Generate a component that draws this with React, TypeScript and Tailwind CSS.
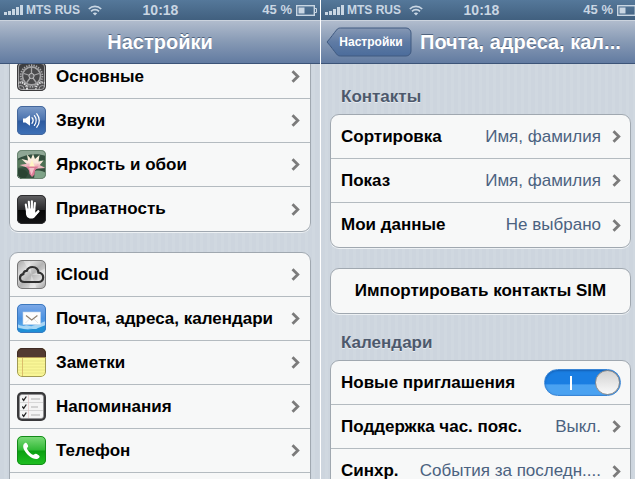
import React from "react";

type Item = { title: string; icon: React.ReactNode };

const Tile = ({ children }: { children: React.ReactNode }) => (
  <svg className="size-[29px] shrink-0 rounded-[5px]" viewBox="0 0 29 29" aria-hidden="true">{children}</svg>
);

const TileBorder = ({ color }: { color: string }) => (
  <rect x="0.5" y="0.5" width="28" height="28" rx="4.5" fill="none" stroke={color} />
);

const GearIcon = () => (
  <Tile>
    <defs>
      <linearGradient id="gear" x1="0" y1="0" x2="0" y2="1">
        <stop offset="0" stopColor="#3a3a3c" />
        <stop offset="1" stopColor="#58585a" />
      </linearGradient>
    </defs>
    <rect width="29" height="29" fill="url(#gear)" />
    <circle cx="14.5" cy="14" r="10.8" fill="none" stroke="#a9a9ab" strokeWidth="1.800" strokeDasharray="1.4 1.1" />
    <circle cx="14.5" cy="14" r="9" fill="none" stroke="#a2a2a4" strokeWidth="1.800" />
    <circle cx="14.5" cy="14" r="7.800" fill="#4a4a4c" />
    <g stroke="#a6a6a8" strokeWidth="1.300">
      <path d="M14.500 14V6M14.500 14l7.600-2.500M14.500 14l4.700 6.500M14.500 14l-4.700 6.500M14.500 14l-7.600-2.500" />
    </g>
    <circle cx="14.5" cy="14" r="2.600" fill="#606062" stroke="#c2c2c4" />
    <circle cx="3.500" cy="27" r="6.500" fill="#505052" stroke="#dededf" strokeWidth="2" strokeDasharray="1.4 1" />
    <circle cx="25.500" cy="27" r="6.500" fill="#505052" stroke="#dededf" strokeWidth="2" strokeDasharray="1.4 1" />
    <circle cx="3.500" cy="27" r="3.500" fill="none" stroke="#a5a5a7" />
    <circle cx="25.500" cy="27" r="3.500" fill="none" stroke="#a5a5a7" />
    <TileBorder color="#3c3c3e" />
    <rect x="1.5" y="1.5" width="26" height="26" rx="3.5" fill="none" stroke="#c4c4c6" opacity="0.7" />
  </Tile>
);

const SoundIcon = () => (
  <Tile>
    <defs>
      <linearGradient id="sound" x1="0" y1="0" x2="0" y2="1">
        <stop offset="0" stopColor="#7d9cc9" />
        <stop offset="0.48" stopColor="#4a72ae" />
        <stop offset="0.52" stopColor="#2d5a9f" />
        <stop offset="1" stopColor="#3f72b8" />
      </linearGradient>
    </defs>
    <rect width="29" height="29" fill="url(#sound)" />
    <path d="M6 12.500h2.500L13 9.300v10.400l-4.500-3.200H6z" fill="#fff" />
    <g fill="none" stroke="#fff" strokeWidth="1.300" strokeLinecap="round">
      <path d="M15 11.700c1.300 1.600 1.300 4 0 5.600" />
      <path d="M17.400 9.700c2.300 2.800 2.300 6.800 0 9.600" />
      <path d="M19.800 7.800c3.300 3.900 3.300 9.500 0 13.400" />
    </g>
    <TileBorder color="#44679c" />
  </Tile>
);

const LotusIcon = () => (
  <Tile>
    <defs>
      <linearGradient id="petal" x1="0" y1="0" x2="0" y2="1">
        <stop offset="0" stopColor="#fdf6dc" />
        <stop offset="0.55" stopColor="#fbeade" />
        <stop offset="1" stopColor="#e795a8" />
      </linearGradient>
    </defs>
    <rect width="29" height="29" fill="#35503f" />
    <path d="M0 0h29v6C20 3 9 4 0 9z" fill="#8fa795" />
    <path d="M0 11c4-3 8-2 10 1l-3 5-7 1z" fill="#56785a" />
    <path d="M19 12c4-3 8-2 10-1v6l-8 1z" fill="#4d7054" />
    <path d="M0 20c5-2 10 0 11 4l-3 5H0z" fill="#2a4432" />
    <path d="M18 21c4-1 8 0 11 2v6H17z" fill="#7fa388" />
    <path d="M15 19L4.500 9l6.500 1.500L10 4.500l4 4.500 2-5 2 5 4.500-4-1 6.500 5-1-7 8.500z" fill="url(#petal)" />
    <path d="M14.500 19L2.500 15l9-1.500zM15.500 19L28.500 18l-8-4z" fill="#eeb9bf" />
    <path d="M15 10l-3 7 3 2 3-2z" fill="#fff5c4" />
    <path d="M9 16.500h12.500l-3.500 4-.500 4-2.500 2.500-2.500-3-.500-3.500z" fill="#dc7c97" />
    <path d="M12 18l2.500 7 3-7z" fill="#f5bfca" />
    <TileBorder color="#6b8672" />
  </Tile>
);

const HandIcon = () => (
  <Tile>
    <defs>
      <linearGradient id="hand" x1="0" y1="0" x2="0" y2="1">
        <stop offset="0" stopColor="#636365" />
        <stop offset="0.5" stopColor="#2a2a2c" />
        <stop offset="0.53" stopColor="#080808" />
        <stop offset="1" stopColor="#141416" />
      </linearGradient>
    </defs>
    <rect width="29" height="29" fill="url(#hand)" />
    <g stroke="#fff" strokeWidth="2.100" strokeLinecap="round" fill="none">
      <path d="M10 16L8.800 9.500M12.400 14L11.800 6.700M14.900 14V6.200M17.200 15L17.900 8" />
      <path d="M18.500 19.500l3-3.300" />
    </g>
    <path d="M8.900 13.500h9.400v4.200l2.500-2.400 1.500.8-3.800 5.200c-.9 1.500-2.200 2.300-4.600 2.300-3.300 0-5-2.500-5-5.800z" fill="#fff" />
    <TileBorder color="#2c2c2e" />
  </Tile>
);

const CloudIcon = () => (
  <Tile>
    <defs>
      <linearGradient id="cloud" x1="0" y1="0" x2="1" y2="1">
        <stop offset="0" stopColor="#a3a3a3" />
        <stop offset="0.3" stopColor="#dcdcdc" />
        <stop offset="0.5" stopColor="#b4b4b4" />
        <stop offset="0.75" stopColor="#dedede" />
        <stop offset="1" stopColor="#9b9b9b" />
      </linearGradient>
    </defs>
    <rect width="29" height="29" fill="url(#cloud)" />
    <path d="M14.500 15L6 0h7zM14.500 15L29 8v7zM14.500 15L20 29h-8z" fill="#fff" opacity="0.35" />
    <path d="M7.500 22C4.600 22 3 20.200 3 18c0-2.100 1.500-3.600 3.300-3.900C6.400 12 8 10.700 9.700 10.900 10.700 8.300 12.900 7 15.400 7c3.400 0 5.700 2.300 6 5.600 2.700 0 4.800 2 4.800 4.700 0 2.800-2 4.700-4.700 4.700z" fill="none" stroke="#303030" strokeWidth="2.200" />
    <TileBorder color="#777" />
  </Tile>
);

const MailIcon = () => (
  <Tile>
    <defs>
      <linearGradient id="mail" x1="0" y1="0" x2="0" y2="1">
        <stop offset="0" stopColor="#7fa9e6" />
        <stop offset="0.5" stopColor="#4a92e2" />
        <stop offset="1" stopColor="#5bb8ee" />
      </linearGradient>
    </defs>
    <rect width="29" height="29" fill="url(#mail)" />
    <path d="M0 20c3 1 4 2 7 2 3-2 6 1 8 0 3-1 6-2 14-5v4c-3 2-5 2-8 4-4 1-6-1-10 0-4 0-7 0-11-2z" fill="#d5effb" opacity="0.65" />
    <path d="M0 24c5 1 8 1 11 2 5-2 8 0 10-2 3-1 5-2 8-3v8H0z" fill="#1f8fd6" />
    <rect x="6" y="8" width="17.500" height="12.500" fill="#fdfdfd" stroke="#c7d8ea" strokeWidth="0.600" />
    <path d="M9 11.500l5.700 4.500 5.700-4.500" fill="none" stroke="#8f8070" strokeWidth="1.200" />
    <path d="M8.500 19l4-4M21 19l-4-4" stroke="#d9d9d9" strokeWidth="0.700" />
    <TileBorder color="#3c78bd" />
  </Tile>
);

const NotesIcon = () => (
  <Tile>
    <rect width="29" height="29" fill="#f9f696" />
    <rect width="29" height="9" fill="#523a31" />
    <rect y="9" width="29" height="1" fill="#b59b55" />
    <path d="M1 13h27M1 16h27M1 19h27M1 22h27M1 25h27" stroke="#e6e283" strokeWidth="0.800" />
    <path d="M5.500 10v19" stroke="#d8b868" strokeWidth="0.900" />
    <path d="M.5 9v15a4.500 4.500 0 0 0 4.500 4.500h19a4.500 4.500 0 0 0 4.500-4.500V9" fill="none" stroke="#a09a55" />
    <path d="M.5 9V5A4.500 4.500 0 0 1 5 .5h19A4.500 4.500 0 0 1 28.500 5v4" fill="none" stroke="#3e2b24" />
  </Tile>
);

const RemindersIcon = () => (
  <Tile>
    <rect width="29" height="29" fill="#39393b" />
    <rect x="2.500" y="2.500" width="24" height="24" rx="2.500" fill="#f4f4f4" stroke="#8b8b8d" strokeWidth="0.600" />
    <path d="M3 10.500h23M3 18.500h23" stroke="#cfcfcf" strokeWidth="0.800" />
    <path d="M11.500 3v23" stroke="#e2c4c4" strokeWidth="0.700" />
    <path d="M14 7h9M14 15h7M14 23h9" stroke="#b0b0b0" strokeWidth="1.200" />
    <path d="M5.300 6.500l1.400 1.800L9.300 4.500M5.300 14.500l1.400 1.800 2.600-3.800M5.300 22.500l1.400 1.800 2.600-3.800" fill="none" stroke="#222" strokeWidth="1.300" />
  </Tile>
);

const PhoneIcon = () => (
  <Tile>
    <defs>
      <linearGradient id="phone" x1="0" y1="0" x2="0" y2="1">
        <stop offset="0" stopColor="#7fdc7c" />
        <stop offset="0.48" stopColor="#31b936" />
        <stop offset="0.52" stopColor="#0b9f12" />
        <stop offset="1" stopColor="#1fc022" />
      </linearGradient>
    </defs>
    <rect width="29" height="29" fill="url(#phone)" />
    <path d="M6.700 8.200c.6-1 1.600-1.600 2.300-1.500.8.2 2.200 2.600 2.200 3.500 0 .8-1.300 1.400-1.200 2.200.3 1.700 3.700 5.600 6.100 6.400.9.300 1.500-1.200 2.600-1.100 1 .1 3.700 1.600 3.900 2.500.2 1-.9 2.100-1.900 2.500-2 .9-5.500-.2-8.800-3-3.700-3.100-7-8.400-5.200-11.500z" fill="#fff" />
    <TileBorder color="#148a1a" />
  </Tile>
);

const Chevron = () => (
  <svg className="h-[13px] w-[9px] shrink-0" viewBox="0 0 9 13" aria-hidden="true">
    <path d="M1.500 1.200L6.800 6.500L1.500 11.800" fill="none" stroke="#7b7b7b" strokeWidth="2.800" />
  </svg>
);

const StatusBar = () => (
  <div className="grid h-5 grid-cols-3 items-center bg-linear-to-b from-[#55789a] to-[#41607f] pl-1 pr-[3px] text-[13px] leading-5 text-[#c9d6e3]">
    <div className="flex items-center">
      <svg className="mr-[2px] h-[10px] w-5 shrink-0" viewBox="0 0 20 10" fill="#c9d6e3" aria-hidden="true">
        <path d="M0 7h3v3H0zM4 6h3v4H4zM8 4h3v6H8zM12 2h3v8h-3zM16 0h3v10h-3z" />
      </svg>
      <span className="shrink-0 whitespace-nowrap text-[12px] font-bold">MTS RUS</span>
      <svg className="ml-2 h-[11px] w-[14px] shrink-0" viewBox="0 0 14 11" fill="none" stroke="#c9d6e3" strokeWidth="1.700" aria-hidden="true">
        <path d="M.8 4C4.300.5 9.700.5 13.200 4" />
        <path d="M3 6.400c2.200-2.300 5.800-2.300 8 0" />
        <path d="M7 10.600L4.800 8.300c1.200-1.200 3.200-1.200 4.400 0z" fill="#c9d6e3" stroke="none" />
      </svg>
    </div>
    <div className="text-center text-[14px] font-bold">10:18</div>
    <div className="flex items-center justify-end gap-1">
      <span className="font-bold">45 %</span>
      <svg className="h-[11px] w-[21px] shrink-0" viewBox="0 0 21 11" aria-hidden="true">
        <rect x="0.700" y="0.700" width="17.600" height="9.600" fill="none" stroke="#c9d6e3" strokeWidth="1.400" />
        <rect x="2.500" y="2.500" width="6" height="6" fill="#c9d6e3" />
        <path d="M18.500 3.500h2v4h-2" fill="none" stroke="#c9d6e3" />
      </svg>
    </div>
  </div>
);

const navBar = "flex h-11 items-center border-t border-b border-t-[#cbd3de] border-b-[#3c5478] bg-linear-to-b from-[#b1bccd] via-[#8699b4] to-[#627ba1] text-xl font-bold text-white text-shadow-[0_-1px_0_#50647f]";
const group = "divide-y divide-[#b4bbc0] rounded-[9px] border border-[#a0a8b0] bg-[#f7f8f8] shadow-[0_1px_0_#edf1f4]";
const row = "flex h-11 w-full items-center text-[17px] font-bold leading-5 text-black";
const linen = "bg-[repeating-linear-gradient(90deg,#cdd5de_0px,#cdd5de_4px,#d0d8e0_4px,#d0d8e0_7px)]";
const heading = "pb-[7px] pl-[11px] text-[17px] font-bold leading-5 text-[#4d596c] text-shadow-[0_1px_0_#e8ecf1]";

const settings: Item[][] = [
  [
    { title: "Основные", icon: <GearIcon /> },
    { title: "Звуки", icon: <SoundIcon /> },
    { title: "Яркость и обои", icon: <LotusIcon /> },
    { title: "Приватность", icon: <HandIcon /> },
  ],
  [
    { title: "iCloud", icon: <CloudIcon /> },
    { title: "Почта, адреса, календари", icon: <MailIcon /> },
    { title: "Заметки", icon: <NotesIcon /> },
    { title: "Напоминания", icon: <RemindersIcon /> },
    { title: "Телефон", icon: <PhoneIcon /> },
    { title: "", icon: null },
  ],
];

const ValueRow = ({ title, value }: { title: string; value: string }) => (
  <a href="#" className={`${row} pl-[10px] pr-[9px]`}>
    <span className="shrink-0 whitespace-nowrap">{title}</span>
    <span className="min-w-0 flex-1 whitespace-nowrap pl-3 text-right font-normal text-[#4b6280]">{value}</span>
    <span className="ml-[11px] flex shrink-0"><Chevron /></span>
  </a>
);

const SettingsScreen = () => (
  <section className="flex min-w-0 flex-col overflow-hidden">
    <StatusBar />
    <header className={`${navBar} justify-center`}>
      <h1>Настройки</h1>
    </header>
    <div className={`${linen} min-h-0 flex-1 overflow-hidden px-[9px]`}>
      {/* list is scrolled a little under the bar */}
      <div className="-mt-[10px] flex flex-col gap-5">
        {settings.map((items, i) => (
          <nav key={i} className={group}>
            {items.map((item) => (
              <a key={item.title} href="#" className={`${row} pl-[7px] pr-[10px]`}>
                {item.icon}
                <span className="ml-[10px] flex-1 whitespace-nowrap">{item.title}</span>
                <Chevron />
              </a>
            ))}
          </nav>
        ))}
      </div>
    </div>
  </section>
);

const MailScreen = () => (
  <section className="flex min-w-0 flex-col overflow-hidden border-l border-white">
    {/* the battery runs off the right edge */}
    <div className="-mr-[6px]">
      <StatusBar />
    </div>
    <header className={`${navBar} gap-2 pl-[5px] pr-2`}>
      <button className="relative h-[30px] w-[86px] shrink-0 pl-1 text-[12px] leading-[30px]">
        <svg className="absolute inset-0 size-full" viewBox="0 0 86 30" aria-hidden="true">
          <defs>
            <linearGradient id="back" x1="0" y1="0" x2="0" y2="1">
              <stop offset="0" stopColor="#8698b4" />
              <stop offset="0.500" stopColor="#5f7ba4" />
              <stop offset="1" stopColor="#4b6c9b" />
            </linearGradient>
          </defs>
          <path d="M1 15C5 10.500 8 6 10.500 3 11.600 1.500 12.800 1 14.500 1H80a5 5 0 0 1 5 5v18a5 5 0 0 1-5 5H14.500c-1.700 0-2.900-.5-4-2C8 24 5 19.500 1 15z" fill="url(#back)" stroke="#405a80" />
        </svg>
        <span className="relative">Настройки</span>
      </button>
      <h1 className="min-w-0 whitespace-nowrap">Почта, адреса, кал...</h1>
    </header>
    <div className={`${linen} min-h-0 flex-1 overflow-hidden pl-[9px] pr-1`}>
      <h2 className={`${heading} pt-[23px]`}>Контакты</h2>
      <div className={group}>
        <ValueRow title="Сортировка" value="Имя, фамилия" />
        <ValueRow title="Показ" value="Имя, фамилия" />
        <ValueRow title="Мои данные" value="Не выбрано" />
      </div>
      <div className={`${group} mt-5`}>
        <button className={`${row} justify-center`}>Импортировать контакты SIM</button>
      </div>
      <h2 className={`${heading} pt-[19px]`}>Календари</h2>
      <div className={group}>
        <div className={`${row} justify-between pl-[10px] pr-[9px]`}>
          <label htmlFor="invites" className="whitespace-nowrap">Новые приглашения</label>
          <input
            id="invites"
            type="checkbox"
            role="switch"
            defaultChecked
            className="flex h-[27px] w-[77px] shrink-0 appearance-none items-center justify-between rounded-full border border-[#3a86d6] bg-linear-to-b from-[#1a7ee2] from-55% to-[#4aa2f1] to-60% pl-[25px] shadow-[inset_0_1px_2px_#1560b4] before:h-[14px] before:w-[2px] before:bg-white after:size-[25px] after:rounded-full after:border after:border-[#8c8c8c] after:bg-linear-to-b after:from-[#d2d2d2] after:to-[#fafafa]"
          />
        </div>
        <ValueRow title="Поддержка час. пояс." value="Выкл." />
        <ValueRow title="Синхр." value="События за последн...." />
      </div>
    </div>
  </section>
);

export default function App() {
  return (
    <main className="grid h-screen grid-cols-[320fr_315fr] overflow-hidden font-['Liberation_Sans',Arial,sans-serif]">
      <SettingsScreen />
      <MailScreen />
    </main>
  );
}
